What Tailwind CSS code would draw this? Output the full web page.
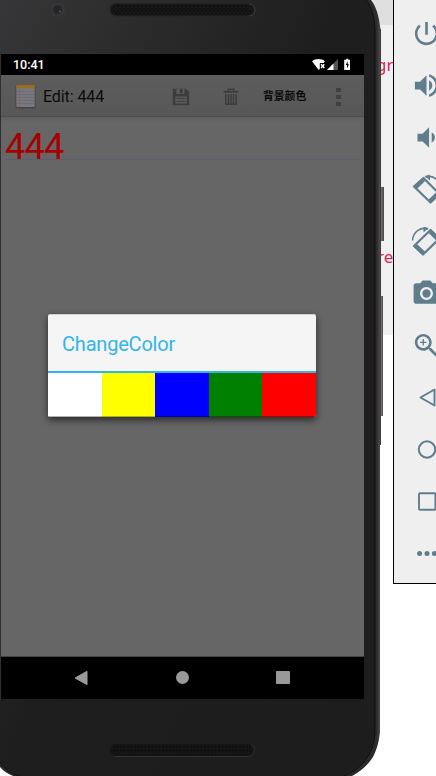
<!DOCTYPE html>
<html lang="en">
<head>
<meta charset="utf-8">
<title>Emulator</title>
<script src="https://cdn.jsdelivr.net/npm/@tailwindcss/browser@4"></script>
</head>
<body class="bg-white">
<main class="relative w-[436px] h-[776px] overflow-hidden font-['Roboto','Noto_Sans_CJK_SC',sans-serif]">

  <!-- editor page behind the emulator -->
  <div class="flex flex-col h-full font-['Noto_Sans',sans-serif] text-[17px] leading-6 text-[#d02a58]">
    <div class="h-[25px] bg-[#dfdfdf]"></div>
    <div class="h-[310px] bg-[#f0f0f0] flex flex-col pl-[376px]">
      <p class="mt-[28px] whitespace-nowrap">gr</p>
      <p class="mt-[168px] pl-px whitespace-nowrap">re</p>
    </div>
  </div>

  <!-- phone body -->
  <svg class="absolute inset-0" width="436" height="776" viewBox="0 0 436 776">
    <defs>
      <linearGradient id="body" x1="0" y1="0" x2="1" y2="0.9">
        <stop offset="0" stop-color="#363638"/><stop offset=".22" stop-color="#2b2b2b"/><stop offset=".5" stop-color="#1e1e1e"/><stop offset="1" stop-color="#1d1d1d"/>
      </linearGradient>
      <linearGradient id="rim" x1="373" x2="381" y1="0" y2="0" gradientUnits="userSpaceOnUse">
        <stop offset="0" stop-color="#2a2a2a"/><stop offset=".5" stop-color="#2e2c2d"/><stop offset=".85" stop-color="#4c4a4b"/><stop offset="1" stop-color="#343434"/>
      </linearGradient>
      <linearGradient id="key" x1="381" x2="384" y1="0" y2="0" gradientUnits="userSpaceOnUse">
        <stop offset="0" stop-color="#777374"/><stop offset="1" stop-color="#474546"/>
      </linearGradient>
      <pattern id="mesh" width="4" height="4.6" patternUnits="userSpaceOnUse" x="113" y="5.2">
        <circle cx="1" cy="1" r=".85" fill="#060606"/><circle cx="3" cy="3.3" r=".7" fill="#0a0a0a"/>
      </pattern>
      <pattern id="mesh2" width="3.5" height="4" patternUnits="userSpaceOnUse" x="113" y="745">
        <circle cx="1" cy="1.6" r=".8" fill="#050505"/>
      </pattern>
    </defs>
    <rect x="380" y="187" width="4" height="54" fill="url(#key)"/>
    <rect x="380" y="296" width="3" height="120" fill="#767273"/>
    <rect x="382" y="296" width="1" height="120" fill="#555253"/>
    <path d="M0 0H371C376 6 379 16 380.5 29H381V445H380V732C379 741 377.500 748 373 757C368 765 360 772 352 776H13C8 774 3 771 0 767Z" fill="url(#rim)"/>
    <path d="M0 0H366C372 7 375 18 375 34V730C375 751 364 768 344 776H20C11 774 4 769 0 762Z" fill="url(#body)"/>
    <path d="M366 0C372 7 375 18 375 34V730C375 751 364 768 344 776" fill="none" stroke="#101010"/>
    <path d="M0 762C4 769 11 774 20 776" fill="none" stroke="#101010"/>
    <circle cx="57.500" cy="9.500" r="7.500" fill="#363637"/><circle cx="57.700" cy="9.700" r="4.500" fill="#262429"/><circle cx="60" cy="11.500" r="1.100" fill="#684654"/>
    <rect x="110" y="3.500" width="144.500" height="12.500" rx="6.200" fill="#171717" stroke="#242424"/>
    <path d="M249 4C257 5 257 15 249 16" fill="none" stroke="#484848" stroke-width=".7"/>
    <rect x="112" y="5" width="140" height="9.800" rx="4.900" fill="url(#mesh)"/>
    <rect x="110" y="744" width="144.500" height="12" rx="6" fill="#151515"/>
    <path d="M115 756.500H248C256 756 256 746 251 745" fill="none" stroke="#363636" stroke-width=".8"/>
    <rect x="112" y="745" width="140" height="10" rx="5" fill="url(#mesh2)"/>
    <path d="M.5 54V699" stroke="#303030"/>
  </svg>

  <!-- device screen -->
  <section class="absolute left-px top-[54px] w-[363px] h-[645px] bg-[#666] flex flex-col overflow-hidden">
    <header class="h-[21px] shrink-0 bg-black flex items-center justify-between pl-[12px] pr-[13px] text-white">
      <span class="pt-[2px] text-[12.500px] font-medium leading-none">10:41</span>
      <svg width="39" height="13" viewBox="0 0 39 13" fill="#fff">
        <path d="M0 3.300C3.500 .2 9.500 .2 13 3.300L11.500 5H7.800V10.700L6.700 12Z"/>
        <path d="M9 6.200L12.300 10M12.300 6.200L9 10" stroke="#fff" stroke-width="1.500"/>
        <path d="M26 1V12H15Z" fill="#555"/><path d="M21.500 5.500V12H15Z"/>
        <path d="M33.600 1.800H34.200V.8H36.200V1.800H38V12H32.200V1.800Z"/><path d="M35.800 3.200L33.600 7H35V10.400L37 6.300H35.600Z" fill="#000"/>
      </svg>
    </header>
    <div class="h-[42px] shrink-0 bg-[linear-gradient(#5d5d5d,#575757)] border-b border-[#4e4e4e] flex items-center pl-[14px] pt-[2px]">
      <svg width="21" height="25" viewBox="0 0 21 25">
        <rect x=".5" y="1" width="20" height="23.500" rx="1.500" fill="#454545"/>
        <rect x="1.300" y="1" width="18.400" height="22" rx="1" fill="#7a787b"/>
        <path d="M1.300 4.200V2Q1.300 1 2.300 1H18.700Q19.700 1 19.700 2V4.200Z" fill="#9a6d1e"/>
        <path d="M1.500 7.500H19.500M1.500 10.500H19.500M1.500 13.500H19.500M1.500 16.500H19.500M1.500 19.500H19.500" stroke="#62627c" stroke-width=".6"/>
        <path d="M4.500 5V23" stroke="#8a5c5a" stroke-width=".7"/>
      </svg>
      <h1 class="ml-[7px] w-[129px] text-[16px] tracking-[-0.08px] leading-none text-[#0a0a0a]">Edit: 444</h1>
      <svg width="18" height="18" viewBox="0 0 18 18">
        <path d="M.8 .8H14L17.200 4V17.200H.8Z" fill="#3c3c3c"/>
        <path d="M4.500 .8H12.500V6H4.500Z" fill="#5b5b5b"/><path d="M7.800 1H10.500V5.300H7.800Z" fill="#3c3c3c"/>
        <path d="M3.300 8.500H14.700V15.500H3.300Z" fill="#5b5b5b"/><path d="M4.500 10.500H13.500M4.500 13.300H13.500" stroke="#3c3c3c"/>
      </svg>
      <svg class="ml-[33px]" width="16" height="18" viewBox="0 0 16 18" fill="none" stroke="#3c3c3c">
        <path d="M.5 3.800H15.500" stroke-width="1.800"/><path d="M5 3V1.200H11V3" stroke-width="1.400"/>
        <path d="M2.800 6V16.300H13.200V6M5.500 6V16M8 6V16M10.500 6V16" stroke-width="1.500"/>
      </svg>
      <span class="ml-[24px] w-[73px] pt-px text-[10.800px] leading-none font-bold text-[#0a0a0a] whitespace-nowrap">背景颜色</span>
      <div class="flex flex-col gap-[3px]"><i class="block w-[5px] h-[4px] bg-[#404040]"></i><i class="block w-[5px] h-[4px] bg-[#404040]"></i><i class="block w-[5px] h-[4px] bg-[#404040]"></i></div>
    </div>
    <div class="flex-1 bg-[linear-gradient(#5f5f5f,#666_5px)] pt-[11px] px-[4px] border-b border-[#444]">
      <p class="h-[32px] border-b border-[#5e5e70] text-[36px] tracking-[-0.7px] leading-[38px] text-[#a60000]">444</p>
    </div>
    <nav class="h-[42px] shrink-0 bg-black flex items-center justify-between pl-[73px] pr-[74px] pb-px">
      <svg width="14" height="16" viewBox="0 0 14 16"><path d="M13 1.300V14.700L1 8Z" fill="#999" stroke="#999" stroke-linejoin="round"/></svg>
      <i class="block size-[13px] rounded-full bg-[#999]"></i>
      <i class="block w-[14px] h-[13px] rounded-[1px] bg-[#999]"></i>
    </nav>
  </section>

  <!-- dialog -->
  <section class="absolute left-[48px] top-[314px] w-[268px] h-[103px] rounded-[2px] overflow-hidden flex flex-col bg-[#f5f5f5] shadow-[0_3px_7px_rgba(0,0,0,0.6)] border-t border-[#d0d0d0]">
    <h2 class="h-[56px] shrink-0 pl-[14px] text-[20px] tracking-[-0.2px] leading-[58px] text-[#33b5e5]">ChangeColor</h2>
    <div class="h-[2px] shrink-0 bg-[#33b5e5]"></div>
    <div class="relative flex-1 grid grid-cols-[54px_53px_54px_53px_54px] after:absolute after:inset-x-0 after:bottom-0 after:h-px after:bg-black/30">
      <div class="bg-white"></div><div class="bg-[#ff0]"></div><div class="bg-[#00f]"></div><div class="bg-[#008000]"></div><div class="bg-[#f00]"></div>
    </div>
  </section>

  <!-- emulator toolbar -->
  <aside class="absolute left-[393px] top-0 w-[66px] h-[584px] bg-[#efefef] border-l border-b border-black flex flex-col items-center pt-[7px] text-[#607d8b]">
    <div class="h-[52px] flex items-center"><svg width="31" height="31" viewBox="0 0 24 24" fill="currentColor"><path d="M13 3h-2v10h2V3zm4.830 2.170l-1.420 1.420C17.990 7.860 19 9.810 19 12c0 3.870-3.130 7-7 7s-7-3.130-7-7c0-2.190 1.010-4.140 2.580-5.420L6.170 5.170C4.230 6.820 3 9.260 3 12c0 4.970 4.030 9 9 9s9-4.030 9-9c0-2.740-1.230-5.180-3.170-6.830z"/></svg></div>
    <div class="h-[52px] flex items-center"><svg width="31" height="31" viewBox="0 0 24 24" fill="currentColor"><path d="M3 9v6h4l5 5V4L7 9H3zm13.500 3c0-1.770-1.020-3.290-2.500-4.030v8.050c1.480-.73 2.500-2.250 2.500-4.020zM14 3.230v2.060c2.890.86 5 3.540 5 6.710s-2.110 5.850-5 6.710v2.060c4.010-.91 7-4.490 7-8.770s-2.990-7.860-7-8.770z"/></svg></div>
    <div class="h-[52px] flex items-center"><svg width="31" height="31" viewBox="0 0 24 24" fill="currentColor"><path d="M18.500 12c0-1.770-1.020-3.290-2.500-4.030v8.050c1.480-.73 2.500-2.250 2.500-4.020zM5 9v6h4l5 5V4L9 9H5z"/></svg></div>
    <div class="h-[52px] flex items-center"><svg width="31" height="31" viewBox="0 0 31 31" fill="none" stroke="currentColor"><path d="M12.500 4L28.500 20L19.500 28.500L3 12.500Z" stroke-width="2.200" stroke-linejoin="round"/><path d="M12.700 5.500L4.700 13.200M27 19.500L19 27" stroke-width="4.200"/><path d="M14.500 3C21.500 .5 29 6 29.500 13.500" stroke-width="1.600"/><path d="M13.500 2L19 .7V6.500Z" fill="currentColor" stroke="none"/></svg></div>
    <div class="h-[52px] flex items-center"><svg width="31" height="31" viewBox="0 0 31 31" fill="none" stroke="currentColor"><path d="M19.500 4L3 20L12 28.500L28.500 12.500Z" stroke-width="2.200" stroke-linejoin="round"/><path d="M19 5.500L27 13.200M4.500 19.500L12.500 27" stroke-width="4.200"/><path d="M17 3C9.500 .5 2 6 1.500 14.500" stroke-width="1.600"/><path d="M17.500 2L12.500 .7V6.500Z" fill="currentColor" stroke="none"/></svg></div>
    <div class="h-[52px] flex items-center"><svg width="31" height="31" viewBox="0 0 24 24" fill="currentColor"><path fill-rule="evenodd" d="M9 2L7.170 4H4c-1.100 0-2 .9-2 2v12c0 1.100.9 2 2 2h16c1.100 0 2-.9 2-2V6c0-1.100-.9-2-2-2h-3.170L15 2H9zm3 15c-2.760 0-5-2.240-5-5s2.240-5 5-5 5 2.240 5 5-2.240 5-5 5z"/><circle cx="12" cy="12" r="3.200"/></svg></div>
    <div class="h-[52px] flex items-center"><svg width="31" height="31" viewBox="0 0 24 24" fill="currentColor"><path d="M15.500 14h-.79l-.28-.27C15.410 12.590 16 11.110 16 9.500 16 5.910 13.090 3 9.500 3S3 5.910 3 9.500 5.910 16 9.500 16c1.610 0 3.090-.59 4.230-1.570l.27.28v.79l5 4.990L20.490 19l-4.990-5zm-6 0C7.010 14 5 11.990 5 9.500S7.010 5 9.500 5 14 7.010 14 9.500 11.990 14 9.500 14zm2.500-4h-2v2H9v-2H7V9h2V7h1v2h2v1z"/></svg></div>
    <div class="h-[52px] flex items-center"><svg width="31" height="31" viewBox="0 0 31 31" fill="none" stroke="currentColor" stroke-width="1.900" stroke-linejoin="round"><path d="M23.500 7.500V23.500L9.500 15.500Z"/></svg></div>
    <div class="h-[52px] flex items-center"><svg width="31" height="31" viewBox="0 0 31 31" fill="none" stroke="currentColor" stroke-width="2"><circle cx="16" cy="15.500" r="8.200"/></svg></div>
    <div class="h-[52px] flex items-center"><svg width="31" height="31" viewBox="0 0 31 31" fill="none" stroke="currentColor" stroke-width="1.900"><rect x="8" y="7.300" width="16.400" height="16.400" rx="1"/></svg></div>
    <div class="h-[52px] flex items-center"><svg width="31" height="31" viewBox="0 0 31 31" fill="currentColor"><circle cx="8.600" cy="15.500" r="2.500"/><circle cx="16" cy="15.500" r="2.500"/><circle cx="23.400" cy="15.500" r="2.500"/></svg></div>
  </aside>
</main>
</body>
</html>
